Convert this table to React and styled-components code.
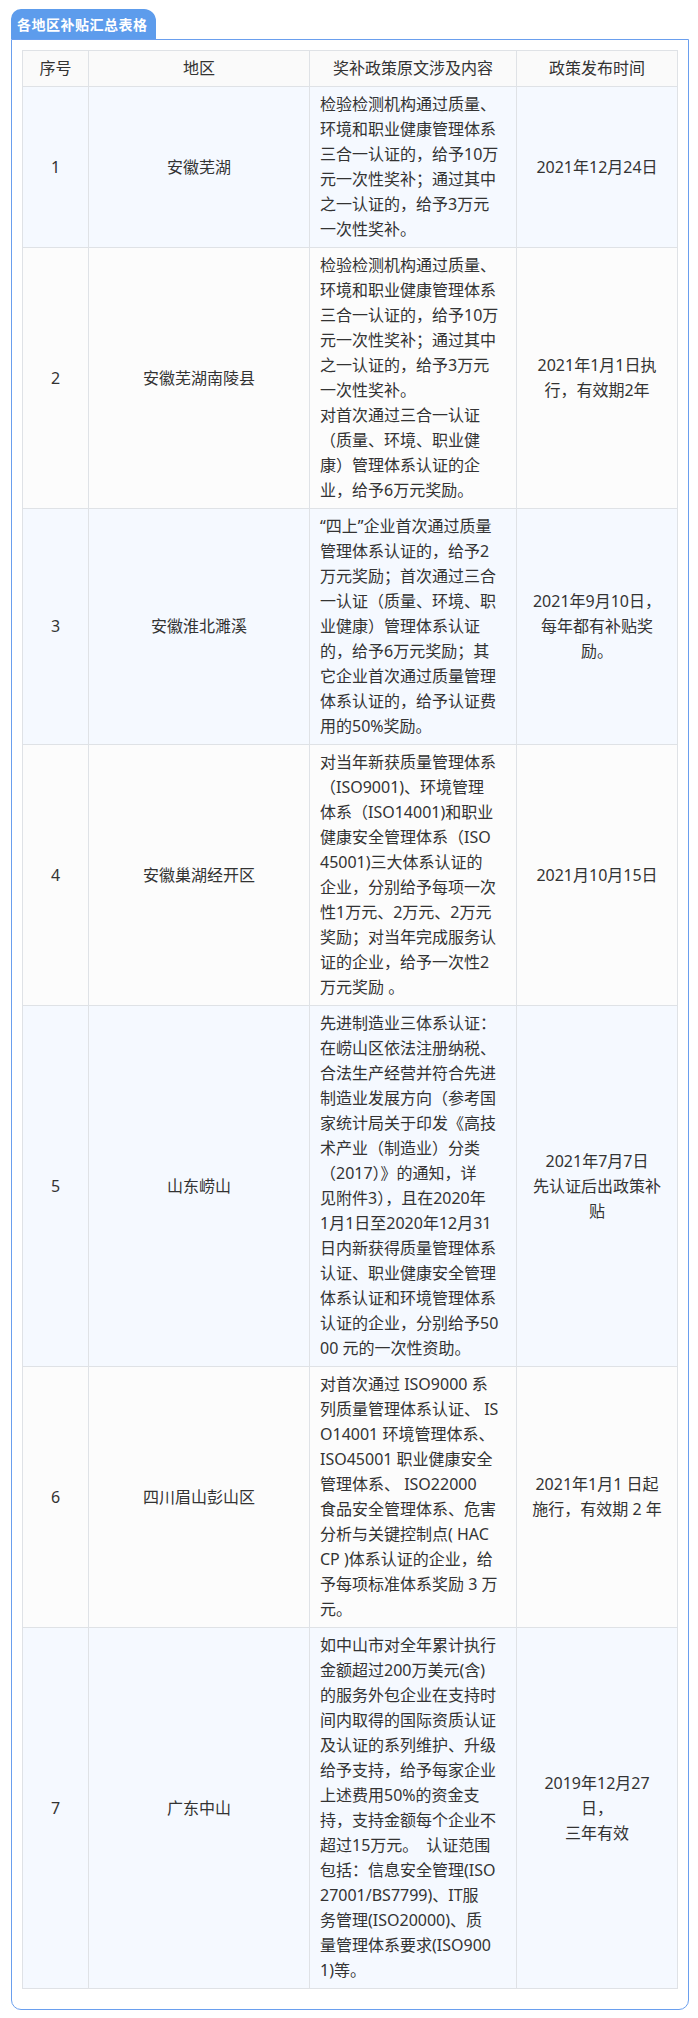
import React from "react";
import styled, { createGlobalStyle } from "styled-components";

const GlobalStyle = createGlobalStyle`
  body {
    margin: 0;
    background: #ffffff;
    font-family: "Noto Sans", "Noto Sans CJK SC", sans-serif;
    color: #333333;
  }
`;

const rows = [
  {
    no: "1",
    area: "安徽芜湖",
    content: [
      "检验检测机构通过质量、",
      "环境和职业健康管理体系",
      "三合一认证的，给予10万",
      "元一次性奖补；通过其中",
      "之一认证的，给予3万元",
      "一次性奖补。",
    ],
    date: ["2021年12月24日"],
  },
  {
    no: "2",
    area: "安徽芜湖南陵县",
    content: [
      "检验检测机构通过质量、",
      "环境和职业健康管理体系",
      "三合一认证的，给予10万",
      "元一次性奖补；通过其中",
      "之一认证的，给予3万元",
      "一次性奖补。",
      "对首次通过三合一认证",
      "（质量、环境、职业健",
      "康）管理体系认证的企",
      "业，给予6万元奖励。",
    ],
    date: ["2021年1月1日执", "行，有效期2年"],
  },
  {
    no: "3",
    area: "安徽淮北濉溪",
    content: [
      "“四上”企业首次通过质量",
      "管理体系认证的，给予2",
      "万元奖励；首次通过三合",
      "一认证（质量、环境、职",
      "业健康）管理体系认证",
      "的，给予6万元奖励；其",
      "它企业首次通过质量管理",
      "体系认证的，给予认证费",
      "用的50%奖励。",
    ],
    date: ["2021年9月10日，", "每年都有补贴奖", "励。"],
  },
  {
    no: "4",
    area: "安徽巢湖经开区",
    content: [
      "对当年新获质量管理体系",
      "（ISO9001)、环境管理",
      "体系（ISO14001)和职业",
      "健康安全管理体系（ISO",
      "45001)三大体系认证的",
      "企业，分别给予每项一次",
      "性1万元、2万元、2万元",
      "奖励；对当年完成服务认",
      "证的企业，给予一次性2",
      "万元奖励 。",
    ],
    date: ["2021月10月15日"],
  },
  {
    no: "5",
    area: "山东崂山",
    content: [
      "先进制造业三体系认证：",
      "在崂山区依法注册纳税、",
      "合法生产经营并符合先进",
      "制造业发展方向（参考国",
      "家统计局关于印发《高技",
      "术产业（制造业）分类",
      "（2017）》的通知，详",
      "见附件3），且在2020年",
      "1月1日至2020年12月31",
      "日内新获得质量管理体系",
      "认证、职业健康安全管理",
      "体系认证和环境管理体系",
      "认证的企业，分别给予50",
      "00 元的一次性资助。",
    ],
    date: ["2021年7月7日", "先认证后出政策补", "贴"],
  },
  {
    no: "6",
    area: "四川眉山彭山区",
    content: [
      "对首次通过 ISO9000 系",
      "列质量管理体系认证、 IS",
      "O14001 环境管理体系、",
      "ISO45001 职业健康安全",
      "管理体系、 ISO22000",
      "食品安全管理体系、危害",
      "分析与关键控制点( HAC",
      "CP )体系认证的企业，给",
      "予每项标准体系奖励 3 万",
      "元。",
    ],
    date: ["2021年1月1 日起", "施行，有效期 2 年"],
  },
  {
    no: "7",
    area: "广东中山",
    content: [
      "如中山市对全年累计执行",
      "金额超过200万美元(含)",
      "的服务外包企业在支持时",
      "间内取得的国际资质认证",
      "及认证的系列维护、升级",
      "给予支持，给予每家企业",
      "上述费用50%的资金支",
      "持，支持金额每个企业不",
      "超过15万元。　认证范围",
      "包括：信息安全管理(ISO",
      "27001/BS7799)、IT服",
      "务管理(ISO20000)、质",
      "量管理体系要求(ISO900",
      "1)等。",
    ],
    date: ["2019年12月27", "日，", "三年有效"],
  },
];

const App = () => {
  return (
    <Page>
      <GlobalStyle />
      <Tab>各地区补贴汇总表格</Tab>
      <Panel>
        <Table>
          <colgroup>
            <col style={{ width: 66 }} />
            <col style={{ width: 221 }} />
            <col style={{ width: 207 }} />
            <col />
          </colgroup>
          <thead>
            <tr>
              <HeadCell>序号</HeadCell>
              <HeadCell>地区</HeadCell>
              <HeadCell>奖补政策原文涉及内容</HeadCell>
              <HeadCell>政策发布时间</HeadCell>
            </tr>
          </thead>
          <tbody>
            {rows.map((r, i) => (
              <Row key={r.no} $odd={i % 2 === 0}>
                <Cell>{r.no}</Cell>
                <Cell>{r.area}</Cell>
                <Cell $left>
                  {r.content.map((line, j) => (
                    <Line key={j}>{line}</Line>
                  ))}
                </Cell>
                <Cell>
                  {r.date.map((line, j) => (
                    <Line key={j}>{line}</Line>
                  ))}
                </Cell>
              </Row>
            ))}
          </tbody>
        </Table>
      </Panel>
    </Page>
  );
};

export default App;

const Page = styled.div`
  padding: 9px 9px 9px 11px;
`;

const Tab = styled.div`
  display: inline-flex;
  align-items: center;
  height: 30px;
  padding: 0 8px 0 6px;
  background-color: #5d9cec;
  color: #ffffff;
  font-family: "Noto Sans CJK SC", sans-serif;
  font-size: 14px;
  font-weight: 700;
  letter-spacing: 0.5px;
  border-radius: 10px 12px 0 0;
  box-sizing: border-box;
`;

const Panel = styled.div`
  border: 1px solid #6a9fee;
  border-radius: 0 0 10px 10px;
  padding: 10px 10px 20px;
`;

const Table = styled.table`
  width: 100%;
  border-collapse: collapse;
  table-layout: fixed;
  font-size: 16px;
  line-height: 25px;
  color: #333333;
  border: 1px solid #dfe2e6;
`;

const HeadCell = styled.th`
  font-weight: 400;
  background-color: #fafafa;
  border: 1px solid #dfe2e6;
  padding: 5px 10px;
  text-align: center;
`;

const Row = styled.tr`
  background-color: ${(p) => (p.$odd ? "#f5f9ff" : "#fcfcfc")};
`;

const Cell = styled.td`
  border: 1px solid #dfe2e6;
  padding: 5px 10px;
  vertical-align: middle;
  text-align: ${(p) => (p.$left ? "left" : "center")};
`;

const Line = styled.div`
  white-space: nowrap;
`;
